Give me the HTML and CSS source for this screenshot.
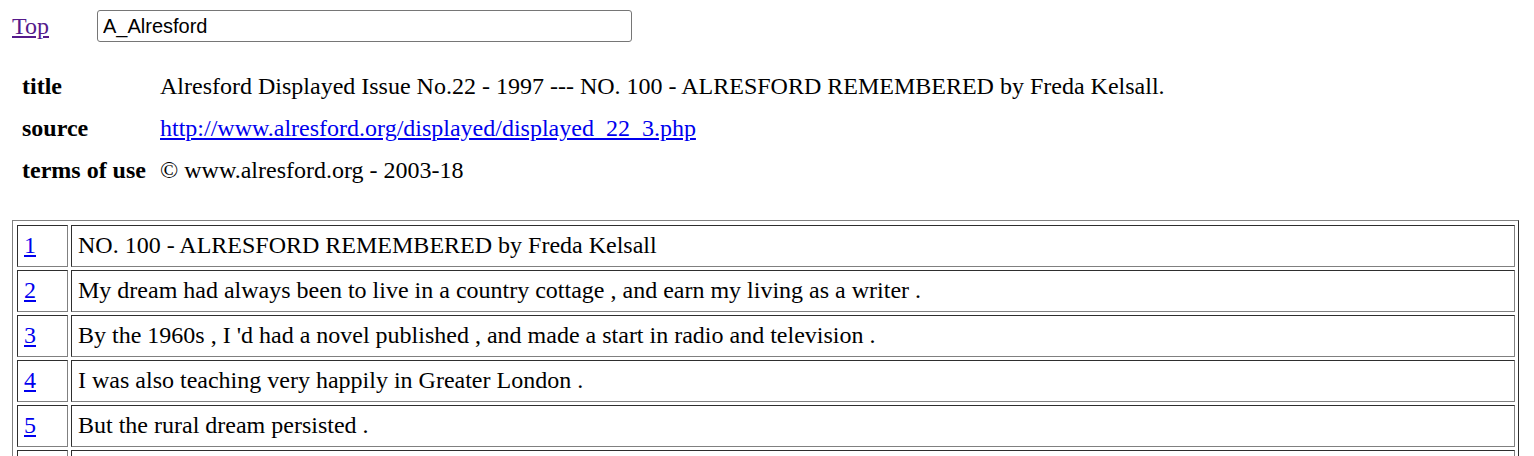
FILE: index.html
```html
<!DOCTYPE html>
<html>
<head>
<meta charset="utf-8">
<link rel="stylesheet" href="styles.css">
</head>
<body>
<div class="topbar">
  <a class="toplink" href="#">Top</a>
  <input class="search" type="text" value="A_Alresford">
</div>
<table class="meta">
  <tr><th>title</th><td>Alresford Displayed Issue No.22 - 1997 --- NO. 100 - ALRESFORD REMEMBERED by Freda Kelsall.</td></tr>
  <tr><th>source</th><td><a class="link" href="#">http://www.alresford.org/displayed/displayed_22_3.php</a></td></tr>
  <tr><th>terms of use</th><td>© www.alresford.org - 2003-18</td></tr>
</table>
<table class="lines">
  <tr><td class="num"><a class="link" href="#">1</a></td><td class="txt">NO. 100 - ALRESFORD REMEMBERED by Freda Kelsall</td></tr>
  <tr><td class="num"><a class="link" href="#">2</a></td><td class="txt">My dream had always been to live in a country cottage , and earn my living as a writer .</td></tr>
  <tr><td class="num"><a class="link" href="#">3</a></td><td class="txt">By the 1960s , I 'd had a novel published , and made a start in radio and television .</td></tr>
  <tr><td class="num"><a class="link" href="#">4</a></td><td class="txt">I was also teaching very happily in Greater London .</td></tr>
  <tr><td class="num"><a class="link" href="#">5</a></td><td class="txt">But the rural dream persisted .</td></tr>
  <tr><td class="num"><a class="link" href="#">6</a></td><td class="txt">&nbsp;</td></tr>
</table>
</body>
</html>
```
FILE: styles.css
```css
html, body {
  margin: 0;
  padding: 0;
  background: #fff;
}
body {
  font-family: "Liberation Serif", "Times New Roman", serif;
  font-size: 24px;
  color: #000;
}
.topbar {
  display: flex;
  align-items: center;
  padding: 10px 0 0 12px;
  height: 32px;
}
.toplink {
  color: #551a8b;
  width: 85px;
  line-height: 28px;
  margin-top: -1px;
}
.search {
  box-sizing: border-box;
  width: 535px;
  height: 32px;
  margin: 0;
  padding: 2px 5px;
  border: 1px solid #767676;
  border-radius: 3px;
  font-family: "Liberation Sans", Arial, sans-serif;
  font-size: 20px;
  color: #000;
  outline: none;
}
.meta {
  margin: 24px 0 0 12px;
  border-collapse: collapse;
}
.meta th {
  text-align: left;
  font-weight: bold;
  padding: 6px 0 8px 10px;
  line-height: 28px;
  width: 148px;
  box-sizing: border-box;
  white-space: nowrap;
}
.meta td {
  padding: 6px 0 8px 0;
  line-height: 28px;
}
.link {
  color: #0000ee;
}
.lines {
  margin: 28px 0 0 12px;
  width: 1507px;
  box-sizing: border-box;
  border-collapse: separate;
  border-spacing: 3px;
  padding: 1px 0 0 1px;
  border: 1px solid;
  border-color: #808080 #2e2e2e #2e2e2e #808080;
}
.lines td {
  border: 1px solid;
  border-color: #2e2e2e #808080 #808080 #2e2e2e;
  padding: 5px 6px 7px 6px;
  line-height: 28px;
  text-align: left;
  vertical-align: middle;
}
.lines .num {
  width: 37px;
  padding-left: 6px;
  padding-right: 6px;
}
```
